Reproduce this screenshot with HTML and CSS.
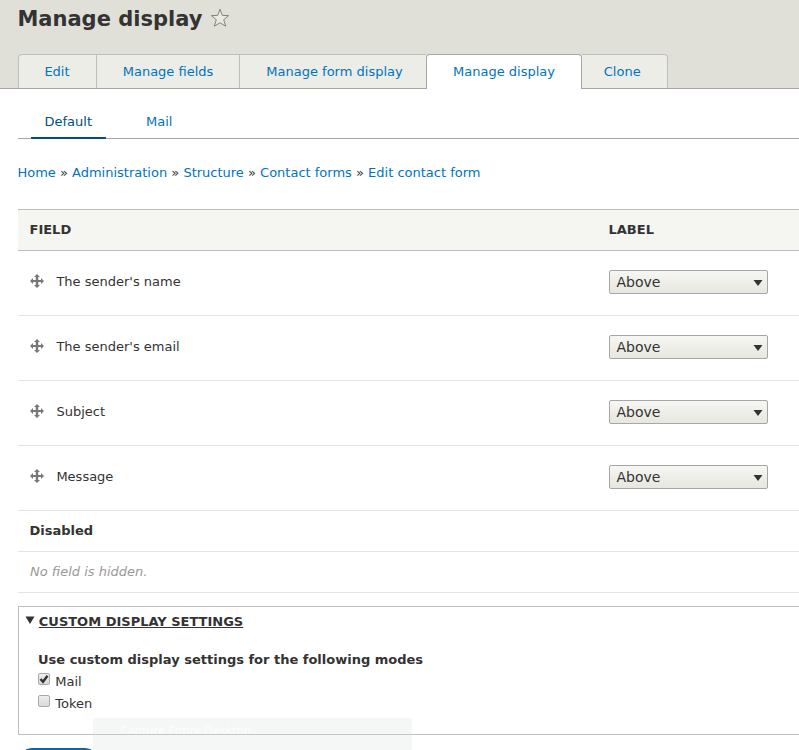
FILE: index.html
```html
<!DOCTYPE html>
<html lang="en">
<head>
<meta charset="utf-8">
<title>Manage display</title>
<link rel="stylesheet" href="styles.css">
</head>
<body>
<svg class="defs" width="0" height="0" aria-hidden="true">
  <symbol id="move" viewBox="0 0 14 14"><path d="M7 0 10 3.1H8.2V5.9H11V4L14 7l-3 3V8.1H8.2v2.8H10L7 14 4 10.9h1.8V8.1H3V10L0 7l3-3v1.9h2.8V3.1H4z" fill="#787878"/></symbol>
  <symbol id="arrow" viewBox="0 0 10 6"><path d="M.5 0h9L5 6z" fill="#333"/></symbol>
</svg>
<header class="header">
  <div class="title"><h1>Manage display</h1>
    <svg class="star" width="20" height="20" viewBox="0 0 20 20"><path d="M10 1.2 12.3 7.4 18.7 7.6 13.7 11.7 15.7 18.2 10 14.8 4.3 18.2 6.3 11.7 1.3 7.6 7.7 7.4z" fill="#e9e9e2" stroke="#85857a" stroke-linejoin="round"/></svg>
  </div>
  <nav class="tabs">
    <a class="tab edit">Edit</a><a class="tab fields">Manage fields</a><a class="tab form">Manage form display</a><a class="tab active">Manage display</a><a class="tab clone">Clone</a>
  </nav>
</header>
<main>
  <nav class="subtabs"><a class="current">Default</a><a>Mail</a></nav>
  <nav class="breadcrumb"><a>Home</a> » <a>Administration</a> » <a>Structure</a> » <a>Contact forms</a> » <a>Edit contact form</a></nav>
  <section class="table">
    <div class="row head"><span>FIELD</span><span>LABEL</span></div>
    <div class="row"><span class="field"><svg class="move"><use href="#move"/></svg>The sender's name</span><span class="select">Above<svg><use href="#arrow"/></svg></span></div>
    <div class="row"><span class="field"><svg class="move"><use href="#move"/></svg>The sender's email</span><span class="select">Above<svg><use href="#arrow"/></svg></span></div>
    <div class="row"><span class="field"><svg class="move"><use href="#move"/></svg>Subject</span><span class="select">Above<svg><use href="#arrow"/></svg></span></div>
    <div class="row"><span class="field"><svg class="move"><use href="#move"/></svg>Message</span><span class="select">Above<svg><use href="#arrow"/></svg></span></div>
    <div class="row short"><b>Disabled</b></div>
    <div class="row short"><em>No field is hidden.</em></div>
  </section>
  <section class="settings">
    <div class="summary"><svg width="10" height="8" viewBox="0 0 10 8"><path d="M.5.5h9L5 8z" fill="#333"/></svg><span>CUSTOM DISPLAY SETTINGS</span></div>
    <div class="legend">Use custom display settings for the following modes</div>
    <div class="option"><i class="box"><svg width="10" height="10" viewBox="0 0 10 10"><path d="M1.5 5 4 7.8 8.5 1.8" fill="none" stroke="#333" stroke-width="2.4"/></svg></i>Mail</div>
    <div class="option"><i class="box"></i>Token</div>
  </section>
  <div class="save"></div>
</main>
<div class="notice">Capture Entire Desktop</div>
</body>
</html>
```
FILE: styles.css
```css
* { box-sizing: border-box; }
html, body { height: 750px; overflow: hidden; }
body { margin: 0; position: relative; background: #fff; color: #333; font: 13px/20px "DejaVu Sans", sans-serif; }
a { color: #0074bd; }
.defs { position: absolute; }
.header { height: 89px; padding-left: 18px; background: #e0e0d8; border-bottom: 1px solid #a6a6a6; }
.title { display: flex; height: 54px; padding-top: 5px; gap: 8px; margin-left: -0.6px; }
h1 { margin: 0; font-size: 21px; line-height: 28px; font-weight: bold; }
.star { margin-top: 3px; }
.tabs { display: flex; height: 35px; }
.tab { height: 34px; padding-top: 7px; text-align: center; background: #ecede6; border: 1px solid #bfbfbf; border-width: 1px 0 0 1px; }
.edit { width: 78px; border-top-left-radius: 4px; padding-right: 1px; }
.fields { width: 143px; }
.form { width: 187px; padding-left: 3px; }
.active { width: 156px; height: 35px; background: #fff; border-color: #a6a6a6; border-right-width: 1px; border-radius: 4px 4px 0 0; }
.clone { width: 86px; border-width: 1px 1px 0 0; border-top-right-radius: 4px; padding-right: 4.6px; }
main { padding-left: 18px; }
.subtabs { display: flex; height: 50px; padding: 17px 0 0 13px; border-bottom: 1px solid #a6a6a6; gap: 27px; }
.subtabs a { height: 33px; padding: 6px 13px 0; }
.subtabs .current { width: 75px; padding-left: 13.5px; color: #004f80; border-bottom: 2px solid #004f80; border-radius: 1px; }
.breadcrumb { height: 70px; padding-top: 24px; margin-left: -0.6px; white-space: nowrap; }
.table { border-top: 1px solid #bfbfba; }
.row { display: grid; grid-template-columns: 579px 1fr; height: 65px; padding-left: 12px; align-items: center; border-bottom: 1px solid #e6e4df; }
.head { height: 41px; background: #f5f5f2; border-color: #bfbfba; font-weight: bold; }
.head span, .row b { margin-left: -0.5px; }
.short { height: 41px; }
.row em { color: #999; }
.field { display: flex; align-items: center; gap: 12.4px; padding-bottom: 3px; }
.move { width: 14px; height: 14px; margin-bottom: 2px; }
.select { display: flex; justify-content: space-between; align-items: center; width: 159px; height: 24px; margin-bottom: 3px; padding: 0 4px 0 6.5px; border: 1px solid #a6a6a6; border-radius: 2px; background: linear-gradient(#f6f6f3, #e7e7df); font-size: 14px; }
.select svg { width: 10px; height: 6px; margin-top: 2px; }
.settings { height: 129px; margin-top: 13px; padding-left: 5.5px; border: 1px solid #bfbfbf; border-right: 0; }
.summary { display: flex; gap: 4.3px; padding-top: 5px; font-weight: bold; text-decoration: underline; }
.summary svg { margin-top: 4px; }
.legend { margin: 18px 0 2px 13.5px; font-weight: bold; }
.option { display: flex; height: 22px; margin-left: 13.5px; gap: 5.3px; }
.box { width: 12px; height: 12px; margin-top: 1px; border: 1px solid #aaa; border-radius: 2px; background: linear-gradient(#eee, #d9d9d9); }
.box svg { display: block; }
.save { width: 81px; height: 28px; margin-top: 13px; border: 1px solid #1e5c90; border-radius: 20px; background: #0071b8; }
.notice { position: absolute; left: 93px; top: 718px; width: 319px; height: 32px; padding: 3px 0 0 27px; border-radius: 2px 2px 0 0; background: #f5f7f6; color: #fcfdfd; font-family: "Noto Sans", sans-serif; font-size: 12px; }
.notice::after { content: ""; position: absolute; left: 0; right: 0; top: 16px; height: 1px; background: #c5c7c6; }
```
